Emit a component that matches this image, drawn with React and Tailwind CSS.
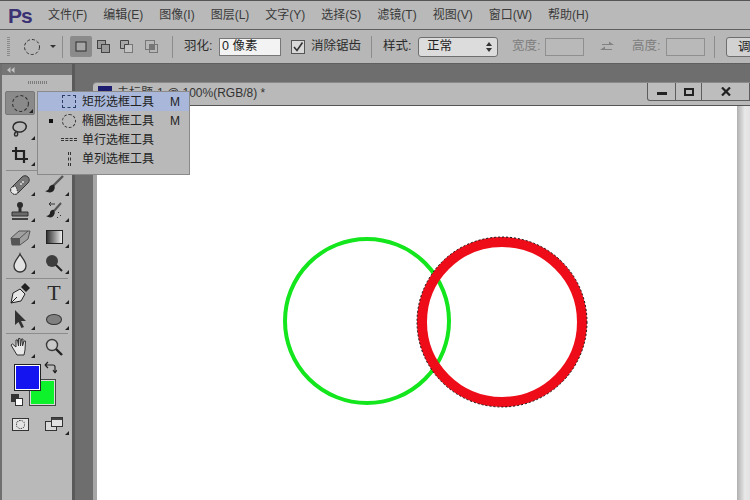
import React from 'react';

const cjk = "font-['Liberation_Sans','Noto_Sans_CJK_SC',sans-serif]";

const menus = ['文件(F)', '编辑(E)', '图像(I)', '图层(L)', '文字(Y)', '选择(S)', '滤镜(T)', '视图(V)', '窗口(W)', '帮助(H)'];

// dashed ellipse marquee used in the option bar and tool slot
const Marquee = ({ size = 18 }) => (
  <svg width={size} height={size} viewBox="0 0 18 18">
    <circle cx="9" cy="9" r="7.5" fill="none" stroke="#333" strokeWidth="1" strokeDasharray="3 2" />
  </svg>
);

const Sep = ({ className = '' }) => <div className={`w-px h-[22px] bg-[#8c8c8c] ${className}`} />;

// selection mode glyphs: new, add, subtract, intersect
const ModeIcon = ({ kind }) => (
  <svg width="16" height="16" viewBox="0 0 16 16">
    {kind === 'new' && <rect x="3" y="3" width="10" height="9" fill="#a6a6a6" stroke="#2e2e2e" />}
    {kind === 'add' && (
      <>
        <rect x="1.5" y="1.5" width="8" height="8" fill="#9a9a9a" stroke="#444" />
        <rect x="5.5" y="5.5" width="8" height="8" fill="#9a9a9a" stroke="#444" />
      </>
    )}
    {kind === 'sub' && (
      <>
        <rect x="5.5" y="5.5" width="8" height="8" fill="#c4c4c4" stroke="#777" />
        <path d="M1.5 9.5v-8h8v4h-4v4z" fill="#a8a8a8" stroke="#444" />
      </>
    )}
    {kind === 'int' && (
      <>
        <rect x="1.5" y="1.5" width="9" height="9" fill="none" stroke="#777" />
        <rect x="5.5" y="5.5" width="8" height="8" fill="none" stroke="#777" />
        <rect x="5.5" y="5.5" width="5" height="5" fill="#777" />
      </>
    )}
  </svg>
);

const OptionBar = () => (
  <div className={`h-[35px] shrink-0 flex items-center bg-[#b7b7b7] border-y border-[#5f5f5f] text-[12.5px] text-[#2c2c2c] overflow-hidden *:shrink-0 ${cjk}`}>
    <div className="ml-[7px] w-[3px] h-[20px] bg-[repeating-linear-gradient(to_bottom,#8a8a8a_0,#8a8a8a_1px,transparent_1px,transparent_2px)]" />
    <div className="ml-[13px]"><Marquee /></div>
    <div className="ml-[9px] w-0 h-0 border-x-[3px] border-x-transparent border-t-[3px] border-t-[#333]" />
    <Sep className="ml-[6px]" />
    <div className="ml-[7px] w-[22px] h-[21px] flex items-center justify-center bg-[#8b8b8b] rounded-[2px]"><ModeIcon kind="new" /></div>
    <div className="ml-[4px]"><ModeIcon kind="add" /></div>
    <div className="ml-[7px]"><ModeIcon kind="sub" /></div>
    <div className="ml-[9px]"><ModeIcon kind="int" /></div>
    <Sep className="ml-[12px]" />
    <span className="ml-[11px] w-[35px] whitespace-nowrap">羽化:</span>
    <div className="w-[62px] h-[18px] flex items-center pl-[2px] bg-[#f3f3f3] border border-[#777] text-[#222]">0 像素</div>
    <div className="ml-[10px] w-[14px] h-[14px] flex items-center justify-center bg-[#d8d8d8] border border-[#555]">
      <svg width="12" height="12" viewBox="0 0 12 12"><path d="M2 6l3 3.5L10.5 1.5" fill="none" stroke="#333" strokeWidth="1.6" /></svg>
    </div>
    <span className="ml-[6px] w-[50px] whitespace-nowrap">消除锯齿</span>
    <Sep className="ml-[10px]" />
    <span className="ml-[11px] w-[35px] whitespace-nowrap">样式:</span>
    <div className="w-[80px] h-[20px] flex items-center justify-between pl-[8px] pr-[5px] bg-[#dcdcdc] border border-[#6e6e6e] rounded-[3px] text-[#222]">
      <span>正常</span>
      <svg width="6" height="10" viewBox="0 0 6 10"><path d="M3 0l3 4H0zM3 10L0 6h6z" fill="#333" /></svg>
    </div>
    <span className="ml-[14px] w-[33px] whitespace-nowrap text-[#7d7d7d]">宽度:</span>
    <div className="w-[39px] h-[18px] bg-[#b9b9b9] border border-[#8f8f8f]" />
    <svg className="ml-[15px]" width="16" height="14" viewBox="0 0 16 14">
      <path d="M3 4h7V1.500L15 5H3zM13 9H6V6.500L1 10h12z" fill="#818181" />
    </svg>
    <span className="ml-[17px] w-[34px] whitespace-nowrap text-[#7d7d7d]">高度:</span>
    <div className="w-[39px] h-[18px] bg-[#b9b9b9] border border-[#8f8f8f]" />
    <Sep className="ml-[9px]" />
    <div className="ml-[11px] w-[40px] h-[20px] pl-[11px] bg-[#d2d2d2] border border-[#6e6e6e] rounded-[3px] leading-[18px] text-[#222] whitespace-nowrap">调整</div>
  </div>
);

// one slot in the tool panel, with the little flyout marker in its corner
const Tool = ({ children, flag = true, active = false }) => (
  <div className={`relative flex items-center justify-center ${active ? 'w-[30px] h-[24px] mx-[2px] my-[1px] bg-[#8a8a8a] rounded-[2px] border border-[#777]' : 'w-[34px] h-[26px]'}`}>
    {children}
    {flag && <div className={`absolute w-0 h-0 border-l-[4px] border-l-transparent border-b-[4px] border-b-[#222] ${active ? 'right-[1px] bottom-[1px]' : 'right-[2px] bottom-[2px]'}`} />}
  </div>
);

const Ico = ({ children }) => (
  <svg width="22" height="22" viewBox="0 0 22 22">{children}</svg>
);

const ToolPanel = () => (
  <div className="relative w-[72px] shrink-0 flex flex-col bg-[#b9b9b9] border-l-2 border-[#6f6f6f]">
    <div className="h-[11px] flex items-center pl-[5px] bg-[#757575]">
      <svg width="8" height="6" viewBox="0 0 8 6"><path d="M3.5 0v6L0 3zM7.500 0v6L4 3z" fill="#c2c2c2" /></svg>
    </div>
    <div className="h-[15px] flex items-center justify-center">
      <div className="w-[19px] h-[3px] bg-[repeating-linear-gradient(to_right,#7c7c7c_0,#7c7c7c_1px,transparent_1px,transparent_2px)]" />
    </div>
    <div className="grid grid-cols-[34px_34px] pl-[1px]">
      <Tool active><Marquee size={19} /></Tool>
      <div />
      <Tool>
        <Ico><path d="M4 9c0-3.500 4-5.500 8-5s6 3 5 6-5 4.500-8 4c-2-.5-5-2-5-5zM7 14c-2 1-2 4 0 4s2-2 1-4" fill="none" stroke="#2c2c2c" strokeWidth="1.500" /></Ico>
      </Tool>
      <div />
      <Tool>
        <Ico><path d="M7 3v12h12M3 7h12v12" fill="none" stroke="#222" strokeWidth="2.200" /></Ico>
      </Tool>
      <div />
      <div className="col-span-2 h-[4px] flex items-center mx-[3px]"><div className="w-full h-px bg-[#8c8c8c]" /></div>

      <Tool>
        <Ico>
          <path d="M3 13 L13 3 a4 4 0 0 1 6 6 L9 19 a4 4 0 0 1-6-6z" fill="#777" stroke="#333" />
          <path d="M3 13a4 4 0 0 0 6 6l-2-7z" fill="#e6e6e6" stroke="#333" strokeDasharray="1.500 1" />
          <circle cx="12" cy="10" r="1" fill="#ddd" />
          <circle cx="14" cy="8" r="1" fill="#ddd" />
        </Ico>
      </Tool>
      <Tool>
        <Ico><path d="M20 2L10 12" stroke="#555" strokeWidth="2.400" /><path d="M11 11c-3-1-5 2-5 3s-2 3-4 3c3 2 8 2 9-1 1-2 1-3 0-5z" fill="#222" /></Ico>
      </Tool>
      <Tool>
        <Ico>
          <circle cx="11" cy="5" r="3" fill="#2c2c2c" />
          <path d="M9.500 7h3v5h-3z" fill="#2c2c2c" />
          <path d="M3 12h16v4H3z" fill="#6b6b6b" stroke="#333" />
          <path d="M3 19h16" stroke="#222" strokeWidth="1.600" />
        </Ico>
      </Tool>
      <Tool>
        <Ico>
          <path d="M18 3l-7 8" stroke="#555" strokeWidth="2" />
          <path d="M11 10c-3-1-4 2-4 3s-2 3-4 3c3 2 7 2 8-1 1-2 1-3 0-5z" fill="#222" />
          <path d="M12 4H6l2-2M6 4l2 2" fill="none" stroke="#333" />
          <path d="M15 12l1 1M17 15l1 1M14 17l1 1" stroke="#333" />
        </Ico>
      </Tool>
      <Tool>
        <Ico><path d="M2 12l8-7h11l-2 8-8 6H3z" fill="#a0a0a0" stroke="#555" /><path d="M2 12h9v7H3z" fill="#555" /><path d="M11 12l8-7" stroke="#555" /></Ico>
      </Tool>
      <Tool>
        <div className="w-[17px] h-[14px] border border-[#222] bg-[linear-gradient(to_right,#333,#ededed)]" />
      </Tool>
      <Tool>
        <Ico><path d="M11 2c1 3 6 7 6 12a6 6 0 0 1-12 0c0-5 5-9 6-12z" fill="#e2e2e2" stroke="#333" strokeWidth="1.300" /></Ico>
      </Tool>
      <Tool>
        <Ico><circle cx="9" cy="9" r="6" fill="#3d3d3d" /><path d="M13 13l6 6" stroke="#222" strokeWidth="2" /></Ico>
      </Tool>
      <div className="col-span-2 h-[4px] flex items-center mx-[3px]"><div className="w-full h-px bg-[#8c8c8c]" /></div>

      <Tool>
        <Ico>
          <path d="M2 21l2-10 7-4 5 5-4 7z" fill="#e6e6e6" stroke="#222" />
          <path d="M2 21l6-6" stroke="#222" />
          <path d="M12 5l4-4 5 5-4 4z" fill="#222" />
        </Ico>
      </Tool>
      <Tool>
        <span className="text-[22px] leading-none font-['Liberation_Serif',serif] text-[#2a2a2a]">T</span>
      </Tool>
      <Tool>
        <Ico><path d="M6 2l11 11h-5l3 6-2.500 1-3-6-3.500 3z" fill="#333" /></Ico>
      </Tool>
      <Tool>
        <div className="w-[16px] h-[11px] rounded-[50%] bg-[#808080] border border-[#333]" />
      </Tool>
      <div className="col-span-2 h-[2px] flex items-end mx-[3px]"><div className="w-full h-px bg-[#8c8c8c]" /></div>

      <Tool>
        <Ico><path d="M5 14L2 9l1.500-1L7 11V4h1.500l1 6V2.500H11l.5 7.500 1-7h1.500l-.5 7 1.500-5h1.500L16 14l-1 5H8z" fill="#e8e8e8" stroke="#333" strokeWidth="1" /></Ico>
      </Tool>
      <Tool flag={false}>
        <Ico><circle cx="9" cy="9" r="5.500" fill="#c9c9c9" stroke="#3a3a3a" strokeWidth="1.400" /><path d="M13 13l6 6" stroke="#222" strokeWidth="2.400" /></Ico>
      </Tool>
    </div>

    {/* foreground and background colour swatches */}
    <div className="relative h-[44px] mt-[3px]">
      <div className="absolute left-[28px] top-[17px] w-[25px] h-[25px] bg-[#0ef22b] border border-[#dcdcdc] outline outline-[#444]" />
      <div className="absolute left-[13px] top-[2px] w-[25px] h-[25px] bg-[#1414f0] border border-white outline outline-[#222]" />
      <svg className="absolute left-[42px] top-[-2px]" width="13" height="13" viewBox="0 0 13 13">
        <path d="M1 4h8a2 2 0 0 1 2 2v5M1 4l3-3M1 4l3 3M11 12l-2-3M11 12l2-3" fill="none" stroke="#222" strokeWidth="1.200" />
      </svg>
      <div className="absolute left-[9px] top-[31px] w-[8px] h-[8px] bg-[#333]" />
      <div className="absolute left-[13px] top-[35px] w-[8px] h-[8px] bg-white border border-[#333]" />
    </div>

    <div className="grid grid-cols-[34px_34px] pl-[1px] mt-[4px]">
      <Tool flag={false}>
        <div className="w-[17px] h-[13px] flex items-center justify-center bg-[#e4e4e4] border border-[#333]">
          <div className="w-[9px] h-[9px] rounded-full border border-dotted border-[#222]" />
        </div>
      </Tool>
      <Tool>
        <svg width="18" height="14" viewBox="0 0 18 14">
          <rect x="0.500" y="4.500" width="11" height="9" fill="#d9d9d9" stroke="#333" />
          <rect x="6.500" y="0.500" width="11" height="9" fill="#e2e2e2" stroke="#333" />
          <path d="M7 1h10v2H7z" fill="#444" />
        </svg>
      </Tool>
    </div>

    {/* flyout for the marquee slot */}
    <div className={`absolute left-[35px] top-[27px] z-10 w-[153px] pb-[6px] bg-[#b9b9b9] border border-[#8a8a8a] text-[12px] text-[#222] ${cjk}`}>
      <FlyoutRow icon={<div className="w-[14px] h-[13px] border border-dashed border-[#2c3c68]" />} label="矩形选框工具" shortcut="M" highlight />
      <FlyoutRow icon={<div className="w-[14px] h-[14px] rounded-full border border-dashed border-[#333]" />} label="椭圆选框工具" shortcut="M" checked />
      <FlyoutRow icon={<div className="w-[16px] h-[3px] border-y border-dashed border-[#333]" />} label="单行选框工具" />
      <FlyoutRow icon={<div className="w-[3px] h-[14px] border-x border-dashed border-[#333]" />} label="单列选框工具" />
    </div>
  </div>
);

const FlyoutRow = ({ icon, label, shortcut, checked, highlight }) => (
  <div className={`h-[19px] flex items-center ${highlight ? 'bg-[#a9b8da]' : ''}`}>
    <div className="w-[21px] flex justify-end pr-[6px]">
      {checked && <div className="w-[4px] h-[4px] bg-[#111]" />}
    </div>
    <div className="w-[20px] flex justify-center">{icon}</div>
    <span className="ml-[3px] w-[88px] whitespace-nowrap">{label}</span>
    <span>{shortcut}</span>
  </div>
);

const DocWindow = () => (
  <div className="flex-1 min-w-0 flex flex-col">
    <div className="h-[18px] shrink-0 bg-[#6e6e6e]" />
    <div className="h-[24px] shrink-0 flex justify-between bg-[#b9b9b9] border-b border-[#555] rounded-tl-[4px] border-t border-t-[#8a8a8a]">
      <div className={`flex items-start pt-[3px] pl-[5px] text-[12px] text-[#333] ${cjk}`}>
        <div className="w-[14px] h-[13px] bg-[#1c1c70]" />
        <span className="ml-[5px] leading-[14px] whitespace-nowrap">未标题-1 @ 100%(RGB/8) *</span>
      </div>
      <div className="h-[18px] flex border border-t-0 border-[#5d5d5d] rounded-bl-[3px] bg-[#bdbdbd]">
        <div className="w-[28px] flex items-center justify-center border-r border-[#5d5d5d]"><div className="w-[10px] h-[3px] mt-[3px] bg-[#222]" /></div>
        <div className="w-[26px] flex items-center justify-center border-r border-[#5d5d5d]"><div className="w-[10px] h-[8px] border-2 border-[#222]" /></div>
        <div className="w-[47px] flex items-center justify-center">
          <svg width="10" height="9" viewBox="0 0 10 9"><path d="M1 0.500l8 8M9 0.500l-8 8" stroke="#222" strokeWidth="2.200" /></svg>
        </div>
      </div>
    </div>
    <div className="flex-1 flex min-h-0">
      <div className="w-[4px] bg-[#a6a6a6]" />
      <div className="flex-1 min-w-0 bg-white">
        <svg className="block" width="640" height="394" viewBox="0 0 640 394">
          <circle cx="270" cy="215" r="82" fill="none" stroke="#14e61e" strokeWidth="4" />
          <circle cx="405" cy="216" r="80" fill="none" stroke="#ee0c18" strokeWidth="10" />
          <circle cx="405" cy="216" r="85" fill="none" stroke="#111" strokeWidth="1" strokeDasharray="2 2" />
        </svg>
      </div>
      {/* scroll track */}
      <div className="w-[13px] shrink-0 bg-[linear-gradient(to_right,#b0b0b0,#e8e8e8_60%,#e2e2e2)]" />
    </div>
  </div>
);

export default function App() {
  return (
    <div className={`w-[750px] h-[500px] flex flex-col overflow-hidden bg-[#6e6e6e] ${cjk}`}>
      {/* menu bar */}
      <div className="h-[29px] shrink-0 flex items-center bg-[#b9b9b9] border-t border-[#555]">
        <span className="ml-[8px] w-[40px] text-[21px] leading-none font-bold tracking-[-1px] text-[#3b3274] font-['Liberation_Sans',sans-serif]">Ps</span>
        <div className="flex gap-[16px] text-[12px] text-[#3a3a3a]">
          {menus.map((m) => <span key={m} className="whitespace-nowrap">{m}</span>)}
        </div>
      </div>
      <OptionBar />
      <div className="flex-1 flex min-h-0">
        <ToolPanel />
        <div className="w-[21px] shrink-0 flex">
          <div className="w-[3px] bg-[#5a5a5a]" />
          <div className="flex-1 bg-[#6e6e6e]" />
        </div>
        <DocWindow />
      </div>
    </div>
  );
}
